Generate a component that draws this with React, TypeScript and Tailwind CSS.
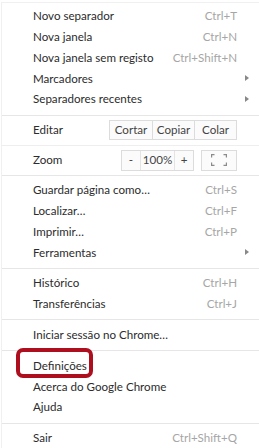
import React from "react";

const font = { fontFamily: 'Lato, "Noto Sans", sans-serif' };

function Row({ label, shortcut, arrow }: { label: string; shortcut?: string; arrow?: boolean }) {
  return (
    <div className="relative flex h-[20.8px] items-center whitespace-nowrap pl-[31px] pr-[22px]">
      <span className="flex-1 text-[11.6px] text-[#2c2c2c] leading-none">{label}</span>
      {shortcut && <span className="text-[11.6px] text-[#a6a6a6] leading-none">{shortcut}</span>}
      {arrow && (
        <span className="absolute right-[10px] top-1/2 -translate-y-1/2 h-0 w-0 border-y-[3px] border-l-[4px] border-y-transparent border-l-[#888888]" />
      )}
    </div>
  );
}

function Sep({ bottom = true }: { bottom?: boolean }) {
  return <div className={`mt-[5px] border-t border-[#e6e6e6] ${bottom ? "mb-[4px]" : ""}`} />;
}

export default function App() {
  return (
    <div className="w-[259px] h-[448px] bg-white overflow-hidden whitespace-nowrap" style={font}>
      <div className="relative ml-[1px] mt-[2px] h-[446px] border-l border-t border-[#f0f0f0] pt-[2.6px]">
        <Row label="Novo separador" shortcut="Ctrl+T" />
        <Row label="Nova janela" shortcut="Ctrl+N" />
        <Row label="Nova janela sem registo" shortcut="Ctrl+Shift+N" />
        <Row label="Marcadores" arrow />
        <Row label="Separadores recentes" arrow />
        <Sep bottom={false} />
        <div className="flex h-[29px] items-center pl-[31px] pr-[22px]">
          <span className="flex-1 text-[11.6px] text-[#2c2c2c]">Editar</span>
          <div className="flex h-[20px] border border-[#dcdcdc] bg-[#fbfbfb] text-[11.6px] text-[#444444]">
            <div className="flex w-[42px] items-center justify-center">Cortar</div>
            <div className="flex w-[42px] items-center justify-center border-l border-[#dcdcdc]">Copiar</div>
            <div className="flex w-[42px] items-center justify-center border-l border-[#dcdcdc]">Colar</div>
          </div>
        </div>
        <div className="border-t border-[#eeeeee]" />
        <div className="flex h-[29px] items-center pl-[31px] pr-[22px]">
          <span className="flex-1 text-[11.6px] text-[#2c2c2c]">Zoom</span>
          <div className="flex h-[21px] border border-[#dcdcdc] bg-[#fbfbfb] text-[11.6px] text-[#444444]">
            <div className="flex w-[18px] items-center justify-center">-</div>
            <div className="flex w-[35px] items-center justify-center border-x border-[#e4e4e4]">100%</div>
            <div className="flex w-[18px] items-center justify-center">+</div>
          </div>
          <div className="ml-[7px] flex h-[21px] w-[36px] items-center justify-center border border-[#dcdcdc] bg-[#fbfbfb]">
            <svg width="16" height="12" viewBox="0 0 16 12" fill="none" stroke="#8a8a8a" strokeWidth="1.2">
              <path d="M0.6 3.5V0.6H3.5M12.5 0.6H15.4V3.5M15.4 8.5V11.4H12.5M3.5 11.4H0.6V8.5" />
            </svg>
          </div>
        </div>
        <div className="mb-[4px] border-t border-[#e6e6e6]" />
        <Row label="Guardar página como…" shortcut="Ctrl+S" />
        <Row label="Localizar…" shortcut="Ctrl+F" />
        <Row label="Imprimir…" shortcut="Ctrl+P" />
        <Row label="Ferramentas" arrow />
        <Sep />
        <Row label="Histórico" shortcut="Ctrl+H" />
        <Row label="Transferências" shortcut="Ctrl+J" />
        <Sep />
        <Row label="Iniciar sessão no Chrome…" />
        <Sep />
        <div className="relative">
          <Row label="Definições" />
          <div className="pointer-events-none absolute left-[14px] top-[-7px] h-[30px] w-[77px] rounded-[7px] border-[4px] border-[#ad0f1e]" />
        </div>
        <Row label="Acerca do Google Chrome" />
        <Row label="Ajuda" />
        <Sep />
        <Row label="Sair" shortcut="Ctrl+Shift+Q" />
      </div>
    </div>
  );
}
